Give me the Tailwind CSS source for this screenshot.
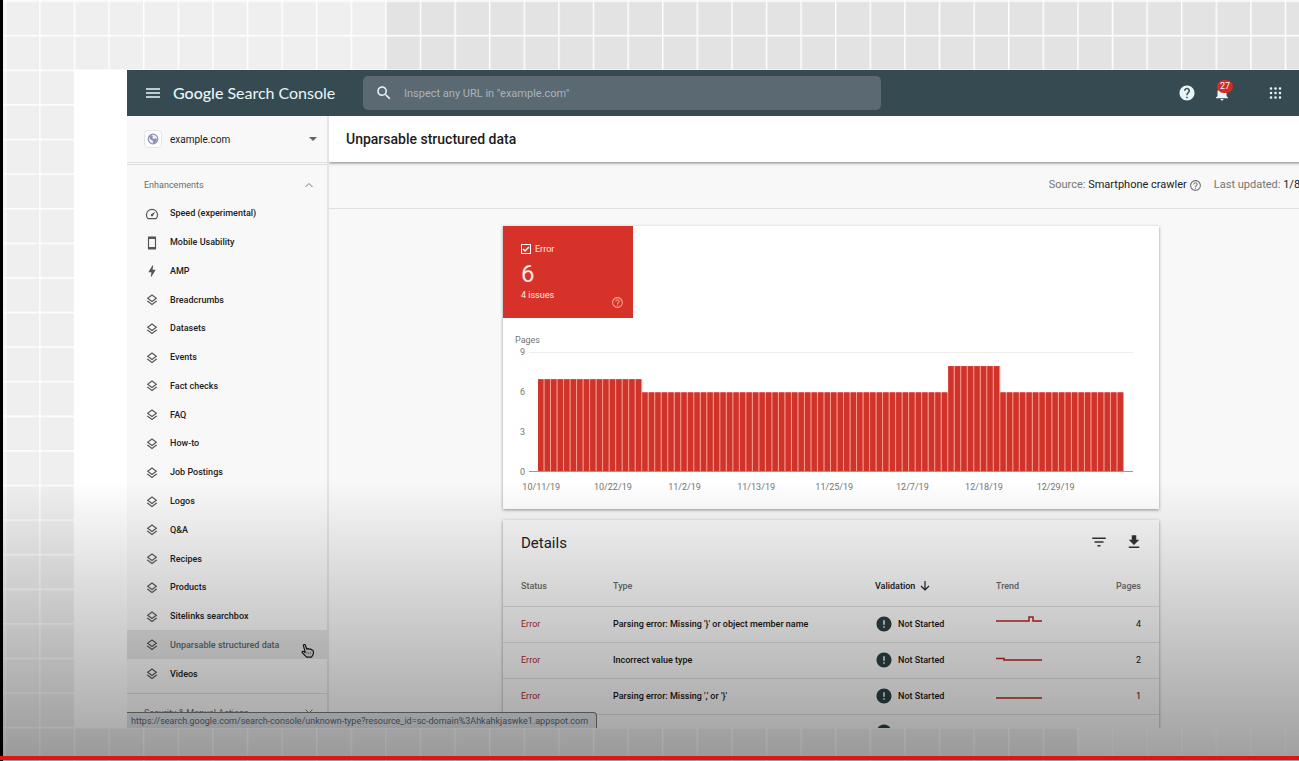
<!DOCTYPE html>
<html lang="en">
<head>
  <meta charset="UTF-8">
  <meta name="viewport" content="width=device-width, initial-scale=1.0">
  <title>Google Search Console - Unparsable structured data</title>
  <script src="https://cdn.jsdelivr.net/npm/@tailwindcss/browser@4"></script>
</head>
<body class="bg-black font-['Roboto','Liberation_Sans',sans-serif]">

  <!-- icons used more than once -->
  <svg class="hidden">
    <symbol id="layers" viewBox="0 0 24 24">
      <path fill="currentColor" d="M11.99 18.54l-7.37-5.73L3 14.07l9 7 9-7-1.63-1.27-7.38 5.74zM12 16l7.36-5.73L21 9l-9-7-9 7 1.63 1.27L12 16zm0-11.47L17.74 9 12 13.47 6.26 9 12 4.53z"/>
    </symbol>
    <symbol id="help" viewBox="0 0 24 24">
      <path fill="currentColor" d="M11 18h2v-2h-2v2zm1-16C6.48 2 2 6.48 2 12s4.48 10 10 10 10-4.48 10-10S17.52 2 12 2zm0 18c-4.41 0-8-3.59-8-8s3.59-8 8-8 8 3.59 8 8-3.59 8-8 8zm0-14c-2.21 0-4 1.79-4 4h2c0-1.1.9-2 2-2s2 .9 2 2c0 2-3 1.75-3 5h2c0-2.25 3-2.5 3-5 0-2.21-1.79-4-4-4z"/>
    </symbol>
    <symbol id="alert" viewBox="0 0 24 24">
      <path fill="currentColor" d="M12 2C6.48 2 2 6.48 2 12s4.48 10 10 10 10-4.48 10-10S17.52 2 12 2zm1 15h-2v-2h2v2zm0-4h-2V7h2v6z"/>
    </symbol>
  </svg>

  <div class="relative ml-[3px] h-screen overflow-hidden bg-[#efefef]">

    <!-- backdrop grid -->
    <svg class="absolute inset-0 size-full">
      <defs>
        <pattern id="cells" x="1.6" y="0.3" width="34.6" height="34.6" patternUnits="userSpaceOnUse">
          <path d="M0 .7H34.6M.7 0V34.6" fill="none" stroke="#fff" stroke-width="1.4"/>
        </pattern>
      </defs>
      <rect x="383" width="100%" height="70" fill="#e3e3e3"/>
      <rect x="1074" y="728" width="100%" height="33" fill="#f8f8f8"/>
      <rect width="100%" height="100%" fill="url(#cells)"/>
    </svg>

    <div class="relative flex h-full flex-col pt-[70px] pb-[33px]">
      <div class="flex min-h-0 grow bg-white ml-[71px] -mr-[34px] pl-[53px]">
        <div class="flex min-w-0 grow flex-col overflow-hidden bg-[#f8f8f8]">

          <header class="flex h-[46px] shrink-0 items-center bg-[#364a52] pl-[18px] text-[#e8f6f8]">
            <button aria-label="Menu" class="w-4">
              <svg viewBox="0 0 16 16" class="size-4"><path d="M1 4h14M1 8h14M1 12h14" stroke="currentColor" stroke-width="1.6"/></svg>
            </button>
            <a href="#" class="ml-3 flex w-[190px] gap-1 font-['Lato','Roboto',sans-serif] text-[16px] leading-6 whitespace-nowrap"><span class="font-medium">Google</span><span>Search</span><span>Console</span></a>
            <div class="flex h-[34px] w-[518px] items-center rounded-[5px] bg-[#5b6972] px-3">
              <svg viewBox="0 0 24 24" class="size-[18px]"><path fill="currentColor" d="M15.5 14h-.79l-.28-.27C15.41 12.59 16 11.11 16 9.5 16 5.91 13.09 3 9.5 3S3 5.91 3 9.5 5.91 16 9.5 16c1.61 0 3.09-.59 4.23-1.57l.27.28v.79l5 4.99L20.49 19l-4.99-5zm-6 0C7.01 14 5 11.99 5 9.5S7.01 5 9.5 5 14 7.01 14 9.5 11.99 14 9.5 14z"/></svg>
              <input type="text" aria-label="Inspect any URL" placeholder='Inspect any URL in "example.com"' class="ml-[11px] grow pt-[2px] text-[11px] outline-none placeholder:text-[#a9b4ba]">
            </div>
            <div class="ml-auto flex items-center pr-4">
              <button aria-label="Help" class="mr-[17px]">
                <svg viewBox="0 0 24 24" class="size-[18px]"><path fill="currentColor" d="M12 2C6.48 2 2 6.48 2 12s4.48 10 10 10 10-4.48 10-10S17.52 2 12 2zm1 17h-2v-2h2v2zm2.07-7.75l-.9.92C13.45 12.9 13 13.5 13 15h-2v-.5c0-1.1.45-2.1 1.17-2.83l1.24-1.26c.37-.36.59-.86.59-1.41 0-1.1-.9-2-2-2s-2 .9-2 2H8c0-2.21 1.79-4 4-4s4 1.79 4 4c0 .88-.36 1.68-.93 2.25z"/></svg>
              </button>
              <button aria-label="Notifications" class="relative mr-9">
                <svg viewBox="0 0 24 24" class="size-[18px]"><path fill="currentColor" d="M12 22c1.1 0 2-.9 2-2h-4c0 1.1.89 2 2 2zm6-6v-5c0-3.07-1.64-5.64-4.5-6.32V4c0-.83-.67-1.5-1.5-1.5s-1.5.67-1.5 1.5v.68C7.63 5.36 6 7.92 6 11v5l-2 2v1h16v-1l-2-2z"/></svg>
                <span class="absolute -top-1 left-1 rounded-full bg-[#d32c26] px-[3px] text-[9px] leading-[13px]">27</span>
              </button>
              <button aria-label="Apps" class="mr-[14px]">
                <svg viewBox="0 0 18 18" class="size-[18px]"><path fill="none" stroke="currentColor" stroke-width="2.6" stroke-linecap="round" d="M4 4.5h0M8.5 4.5h0M13 4.5h0M4 9h0M8.5 9h0M13 9h0M4 13.5h0M8.5 13.5h0M13 13.5h0"/></svg>
              </button>
              <span class="size-[18px] rounded-full bg-[#e8f6f8]"></span>
            </div>
          </header>

          <div class="flex min-h-0 grow">

            <!-- sidebar -->
            <nav class="w-[202px] shrink-0 overflow-hidden border-r-2 border-[#e4e4e4] text-[9px] leading-[15px] text-[#202124]">
              <button class="flex h-[46px] w-full items-center pr-[10px] pl-[17px]">
                <span class="flex size-[18px] items-center justify-center rounded-sm border border-[#e4e4ee] bg-white">
                  <svg viewBox="0 0 12 12" class="size-3"><circle cx="6" cy="6" r="4.8" fill="#eef" stroke="#8f8fb4" stroke-width="1.2"/><path fill="#8f8fb4" d="M2 3l3-1 1 2-1 1 2 1 2-1 1 2-2 3-2 0 0-2-3-2z"/></svg>
                </span>
                <span class="ml-2 text-[10px]">example.com</span>
                <svg viewBox="0 0 8 4" class="ml-auto h-1 w-2"><path fill="#616161" d="M0 0h8L4 4z"/></svg>
              </button>
              <div class="h-[3px] border-y border-[#dedede]"></div>
              <button class="flex h-[34px] w-full items-center justify-between pt-[6px] pr-[13px] pl-[17px] text-[#6b6b6b]">
                <span>Enhancements</span>
                <svg viewBox="0 0 10 10" class="size-[10px]"><path d="M1.5 7L5 3.5 8.5 7" fill="none" stroke="#777"/></svg>
              </button>
              <ul id="navList" class="grid h-[489px] auto-rows-fr font-medium"></ul>
              <button class="mt-[5px] flex w-full justify-between border-t border-[#dcdcdc] pt-3 pr-[13px] pl-[17px] text-[#6b6b6b]">
                <span>Security &amp; Manual Actions</span>
                <svg viewBox="0 0 10 10" class="size-[10px]"><path d="M1.5 3.5L5 7l3.5-3.5" fill="none" stroke="#777"/></svg>
              </button>
            </nav>

            <main class="flex min-w-0 grow flex-col overflow-hidden">
              <h1 class="relative flex h-[46px] shrink-0 items-center bg-white pl-[17px] text-[14px] font-medium text-[#1c1c1c] shadow-[0_1px_3px_rgba(0,0,0,0.5)]">Unparsable structured data</h1>
              <div class="flex h-[47px] shrink-0 items-center justify-end border-b border-[#e0e0e0] pt-px pr-4 text-[11px] text-[#757575]">
                <span>Source: <span class="text-[#202124]">Smartphone crawler</span></span>
                <svg class="ml-[2px] size-[13px]"><use href="#help"/></svg>
                <span class="ml-3">Last updated: <span class="text-[#202124]">1/8/20</span></span>
              </div>

              <div class="mx-auto flex min-h-0 w-full max-w-[656px] grow flex-col gap-[11px] pt-[17px]">
                <section class="h-[283px] shrink-0 bg-white shadow-[0_1px_3px_rgba(0,0,0,0.4)]">
                  <div class="relative h-[92px] w-[130px] bg-[#d73229] px-[18px] pt-4 text-[9px] text-[#ffe9e4]">
                    <label class="flex items-center gap-1 leading-[14px]">
                      <input type="checkbox" checked class="size-[10px] appearance-none border border-white bg-[#d73229] outline-none checked:bg-[url('data:image/svg+xml,%3Csvg%20xmlns=%22http://www.w3.org/2000/svg%22%20viewBox=%220%200%208%208%22%3E%3Cpath%20d=%22M1%204l2%202%204-4%22%20fill=%22none%22%20stroke=%22white%22%20stroke-width=%221.5%22/%3E%3C/svg%3E')]">
                      Error
                    </label>
                    <div class="mt-1 text-[24px] leading-7">6</div>
                    <div class="leading-[14px]">4 issues</div>
                    <svg class="absolute right-[9px] bottom-[9px] size-[13px] text-[#ff9d8e]"><use href="#help"/></svg>
                  </div>

                  <div class="px-3 pt-4 text-[9px] leading-3 text-[#757575]">
                    <div>Pages</div>
                    <div class="flex">
                      <div class="flex h-[132px] w-[10px] shrink-0 flex-col justify-between text-right">
                        <span>9</span><span>6</span><span>3</span><span>0</span>
                      </div>
                      <div class="mt-[6px] mr-[14px] ml-1 h-[120px] min-w-0 grow border-t border-b border-t-[#eee] border-b-[#999] px-[9px]">
                        <svg id="chart" viewBox="0 0 90 9" preserveAspectRatio="none" class="block size-full"></svg>
                      </div>
                    </div>
                    <div id="dates" class="relative mt-[3px] mr-[23px] ml-[23px] h-3"></div>
                  </div>
                </section>

                <section class="shrink-0 bg-[#f8f8f8] shadow-[0_1px_3px_rgba(0,0,0,0.4)]">
                  <div class="flex h-[47px] items-center pr-4 pl-[18px]">
                    <h2 class="text-[15px] text-[#202124]">Details</h2>
                    <button aria-label="Filter" class="mr-[17px] ml-auto pb-1"><svg viewBox="0 0 24 24" class="size-[18px]"><path fill="#333" d="M10 18h4v-2h-4v2zM3 6v2h18V6H3zm3 7h12v-2H6v2z"/></svg></button>
                    <button aria-label="Download" class="pb-1"><svg viewBox="0 0 24 24" class="size-[18px]"><path fill="#333" d="M19 9h-4V3H9v6H5l7 7 7-7zM5 18v2h14v-2H5z"/></svg></button>
                  </div>
                  <table class="w-full table-fixed text-left text-[9px] leading-[15px] text-[#151515]">
                    <thead class="text-[#6b6b6b]">
                      <tr class="h-[39px] border-b border-[#dcdcdc]">
                        <th class="w-[110px] pl-[18px] font-medium">Status</th>
                        <th class="font-medium">Type</th>
                        <th class="w-[121px] font-medium text-[#151515]"><span class="flex items-center gap-1">Validation <svg viewBox="0 0 12 12" class="size-3"><path d="M6 1v9M2 6l4 4 4-4" fill="none" stroke="#222" stroke-width="1.2"/></svg></span></th>
                        <th class="w-[80px] font-medium">Trend</th>
                        <th class="w-[83px] pr-[18px] text-right font-medium">Pages</th>
                      </tr>
                    </thead>
                    <tbody id="issues"></tbody>
                  </table>
                </section>
              </div>
            </main>
          </div>
        </div>
      </div>
    </div>

    <!-- pointer and link status -->
    <svg viewBox="0 0 24 24" class="absolute top-[643px] left-[297px] size-[15px]"><path fill="#ddd" stroke="#111" stroke-width="1.8" stroke-linejoin="round" d="M8 13L5.5 4.5a1.500 1.500 0 0 1 3-1L11 10l2-1 2 1 2-.5 1.5 1.5 2 .5 1 3-.5 4-2.5 4h-8L3.5 15.5c-1-1.5 1-3 2.5-2l2 2z"/><path d="M11 14v4M14 14v4M17 14v4" stroke="#555"/></svg>
    <div class="absolute bottom-[33px] left-[124px] h-4 rounded-tr-sm border-t border-r border-[#777] bg-[#dfe3e8] pr-2 pl-1 text-[9px] leading-4 text-[#5c636b]">https://search.google.com/search-console/unknown-type?resource_id=sc-domain%3Ahkahkjaswke1.appspot.com</div>

    <!-- player shade -->
    <div class="pointer-events-none absolute inset-x-0 bottom-0 h-[281px] bg-linear-to-t from-black/36 to-transparent"></div>
  </div>

  <div class="absolute inset-x-0 bottom-px h-1 bg-[#df1414]"></div>

  <script>
    const items = ["Speed (experimental)", "Mobile Usability", "AMP", "Breadcrumbs", "Datasets", "Events", "Fact checks", "FAQ", "How-to", "Job Postings", "Logos", "Q&A", "Recipes", "Products", "Sitelinks searchbox", "Unparsable structured data", "Videos"];
    const icons = {
      "Speed (experimental)": '<svg viewBox="0 0 24 24" class="size-[14px]"><path d="M5 20a9.5 9.5 0 1 1 14 0z" fill="none" stroke="currentColor" stroke-width="2" stroke-linejoin="round"/><path fill="currentColor" d="M17.5 8l-4 7.5a2 2 0 1 1-3-3z"/></svg>',
      "Mobile Usability": '<svg viewBox="0 0 24 24" class="size-[14px]"><path d="M6 2h12v20H6zM6 4h12M6 20h12" fill="none" stroke="currentColor" stroke-width="2"/></svg>',
      "AMP": '<svg viewBox="0 0 24 24" class="size-[14px]"><path fill="currentColor" d="M11 22h-1l1-8H7c-1 0-1-.8-.6-1.3L13 2h1l-1 8h4c1 0 1 .7.6 1.3z"/></svg>'
    };
    const layers = '<svg class="size-[14px]"><use href="#layers"/></svg>';

    document.getElementById("navList").innerHTML = items.map(name => {
      const active = name === "Unparsable structured data";
      return `<li class="${active ? "bg-[#e4e4e4] text-[#566970]" : ""}">
        <a href="#" class="flex h-full items-center gap-[11px] pt-px pl-[18px]"><span class="text-[#555]">${icons[name] || layers}</span>${name.replace("&", "&amp;")}</a>
      </li>`;
    }).join("");

    // error pages per day
    const days = [].concat(Array(16).fill(7), Array(47).fill(6), Array(8).fill(8), Array(19).fill(6));
    document.getElementById("chart").innerHTML = days.map((v, i) =>
      `<rect x="${i}" y="${9 - v}" width="1" height="${v}" fill="#f79a8e"/><rect x="${i}" y="${9 - v}" width="0.84" height="${v}" fill="#d0332a"/>`
    ).join("");

    const ticks = [[0, "10/11/19"], [11, "10/22/19"], [22, "11/2/19"], [33, "11/13/19"], [45, "11/25/19"], [57, "12/7/19"], [68, "12/18/19"], [79, "12/29/19"]];
    document.getElementById("dates").innerHTML = ticks.map(([i, label]) =>
      `<span class="absolute -translate-x-1/2" style="left:${(i + 0.5) / 90 * 100}%">${label}</span>`
    ).join("");

    const issues = [
      ["Parsing error: Missing '}' or object member name", "M0 6H33V2H37V6H46", 4],
      ["Incorrect value type", "M0 7.5H8V9H46", 2],
      ["Parsing error: Missing ',' or '}'", "M0 11H46", 1],
      ["Parsing error: Missing ':'", "M0 11H46", 1]
    ];
    document.getElementById("issues").innerHTML = issues.map(([type, trend, pages]) => `
      <tr class="h-9 border-b border-[#dcdcdc]">
        <td class="pl-[18px] text-[#b3261e]">Error</td>
        <td class="font-medium">${type}</td>
        <td class="font-medium"><span class="flex items-center gap-[5px]"><svg class="size-[18px] text-[#2b4046]"><use href="#alert"/></svg>Not Started</span></td>
        <td><svg viewBox="0 0 46 18" class="h-[18px] w-[46px]"><path d="${trend}" fill="none" stroke="#b3261e" stroke-width="1.5"/></svg></td>
        <td class="pr-[18px] text-right">${pages}</td>
      </tr>`).join("");
  </script>
</body>
</html>
